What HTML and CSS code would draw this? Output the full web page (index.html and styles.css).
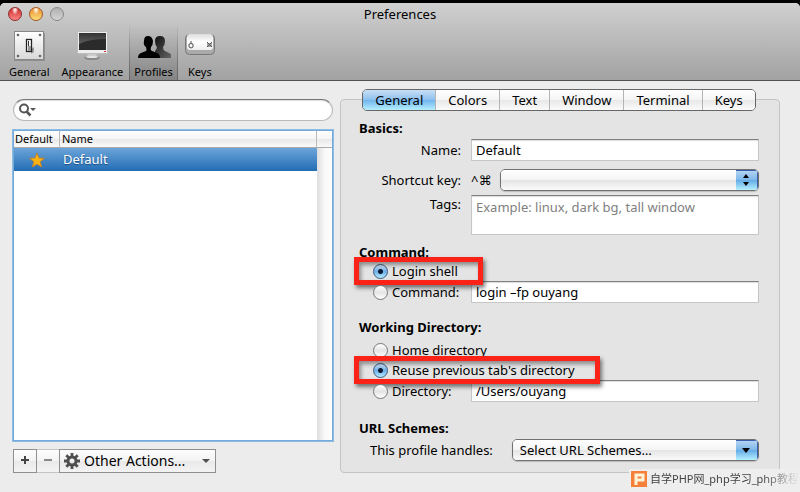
FILE: index.html
```html
<!DOCTYPE html>
<html lang="en">
<head>
<meta charset="UTF-8" />
<meta name="viewport" content="width=device-width, initial-scale=1" />
<title>Preferences</title>
<link rel="stylesheet" href="styles.css">
</head>
<body>
<div class="window">

    <!-- Title bar and toolbar -->
    <header class="titlebar">
        <div class="title-row">
            <div class="lights">
                <button type="button" class="light close" aria-label="Close"></button>
                <button type="button" class="light minimize" aria-label="Minimize"></button>
                <button type="button" class="light zoom" aria-label="Zoom"></button>
            </div>
            <h1>Preferences</h1>
        </div>
        <nav class="toolbar">
            <button type="button" class="tool">
                <svg width="32" height="32" viewBox="0 0 32 32">
                    <defs>
                        <linearGradient id="plate" x1="0" y1="0" x2="0" y2="1">
                            <stop offset="0" stop-color="#fff" /><stop offset="1" stop-color="#d8d8d8" />
                        </linearGradient>
                    </defs>
                    <rect x="1" y="4" width="31" height="28" fill="#777" opacity=".6" />
                    <rect x="1.500" y="2.500" width="29" height="28" fill="url(#plate)" stroke="#888" />
                    <g fill="#666">
                        <circle cx="5" cy="6" r="1.300" /><circle cx="27" cy="6" r="1.300" />
                        <circle cx="5" cy="27" r="1.300" /><circle cx="27" cy="27" r="1.300" />
                    </g>
                    <path d="M18 20l3-2v5l-3 2z" fill="#999" />
                    <rect x="13.500" y="10.500" width="5" height="12" fill="#fff" stroke="#222" stroke-width="1.300" />
                    <path d="M15.500 12v5" stroke="#333" />
                    <rect x="15" y="17" width="3" height="5" fill="#999" />
                </svg>
                General
            </button>
            <button type="button" class="tool">
                <svg width="32" height="32" viewBox="0 0 32 32">
                    <defs>
                        <linearGradient id="screen" x1="0" y1="0" x2="0" y2="1">
                            <stop offset="0" stop-color="#333" /><stop offset="1" stop-color="#777" />
                        </linearGradient>
                    </defs>
                    <ellipse cx="16" cy="29" rx="8" ry="2" fill="#888" />
                    <path d="M12 24h8l1 4H11z" fill="#ccc" />
                    <ellipse cx="16" cy="28" rx="6" ry="1" fill="#e4e4e4" />
                    <rect x="1.500" y="2.500" width="30" height="22" rx="1" fill="#eee" stroke="#bbb" />
                    <rect x="3" y="4" width="27" height="17" fill="url(#screen)" />
                    <path d="M3 15q10-5 27-5v11H3z" fill="#2b2b2b" />
                    <rect x="28" y="22" width="2" height="1" fill="#d33" />
                </svg>
                Appearance
            </button>
            <button type="button" class="tool selected">
                <svg width="34" height="32" viewBox="0 0 34 32">
                    <defs>
                        <linearGradient id="person" x1="0" y1="0" x2="1" y2="1">
                            <stop offset="0" stop-color="#111" /><stop offset="1" stop-color="#666" />
                        </linearGradient>
                    </defs>
                    <path d="M18 29V22q2-2 2-4-2-2-2-6 0-5 5-5t5 5q0 4-2 6 0 3 2 4l4 2q3 1 3 5z" fill="url(#person)" />
                    <path d="M1 29q0-4 3-5l5-2q1-1 0-4-3-2-2-6 0-5 4-5t5 5q0 4-2 6-1 3 1 4l5 2q3 1 3 5z" />
                </svg>
                Profiles
            </button>
            <button type="button" class="tool">
                <svg width="32" height="32" viewBox="0 0 32 32">
                    <defs>
                        <linearGradient id="keytop" x1="0" y1="0" x2="0" y2="1">
                            <stop offset="0" stop-color="#ddd" /><stop offset=".5" stop-color="#fff" /><stop offset="1" stop-color="#eee" />
                        </linearGradient>
                    </defs>
                    <rect x="1.500" y="5.500" width="29" height="20" rx="4" fill="#aaa" stroke="#777" />
                    <rect x="3" y="5" width="26" height="16" rx="3" fill="url(#keytop)" />
                    <g fill="none" stroke="#555">
                        <path d="M5 15q2-1 4 0v3q-2 2-4 0zM7 14v-2" />
                        <path d="M23 13l5 5M28 13l-5 5M23 15h5M23 17h5" />
                    </g>
                </svg>
                Keys
            </button>
        </nav>
    </header>

    <main class="content">

        <!-- Profile list -->
        <section class="profiles">
            <div class="search">
                <svg width="20" height="14" viewBox="0 0 20 14">
                    <circle cx="6" cy="5.500" r="4" fill="none" stroke="#555" stroke-width="2" />
                    <path d="M8.500 8.500l4 4" stroke="#555" stroke-width="2.500" />
                    <path d="M12 5h6l-3 3z" fill="#555" />
                </svg>
                <input type="search" aria-label="Search profiles">
            </div>

            <div class="list">
                <table>
                    <thead>
                        <tr><th class="col-default">Default</th><th>Name</th><th class="col-scroll"></th></tr>
                    </thead>
                    <tbody>
                        <tr>
                            <td class="col-default">
                                <svg width="16" height="16" viewBox="0 0 16 16">
                                    <path d="M8 1l2 5 5.500.3-4.300 3.500L12.700 15 8 12.200 3.300 15l1.500-5.200L.500 6.300 6 6z" fill="#fbb414" stroke="#b98332" />
                                </svg>
                            </td>
                            <td>Default</td>
                            <td class="col-scroll"></td>
                        </tr>
                    </tbody>
                </table>
                <div class="scroll-track"></div>
            </div>

            <div class="list-actions">
                <button type="button" aria-label="Add profile">
                    <svg width="10" height="10" viewBox="0 0 10 10"><path d="M1 4h8M5 0v8" stroke="#444" stroke-width="2" /></svg>
                </button>
                <button type="button" class="remove" aria-label="Remove profile" disabled>
                    <svg width="10" height="10" viewBox="0 0 10 10"><path d="M1 4h8" stroke="#888" stroke-width="2" /></svg>
                </button>
                <button type="button" class="other">
                    <svg width="16" height="16" viewBox="0 0 16 16">
                        <circle cx="8" cy="8" r="4" fill="none" stroke="#505050" stroke-width="3" />
                        <path d="M8 0v4M8 12v4M0 8h4M12 8h4M2.300 2.300l3 3M10.700 10.700l3 3M13.700 2.300l-3 3M5.300 10.700l-3 3" stroke="#505050" stroke-width="2.800" />
                    </svg>
                    <span>Other Actions...</span>
                    <svg width="8" height="4" viewBox="0 0 8 4"><path d="M0 0h8L4 4z" fill="#505050" /></svg>
                </button>
            </div>
        </section>

        <!-- Settings of the selected profile -->
        <section class="panel">
            <div class="tabs" role="tablist">
                <button type="button" role="tab" class="active" aria-selected="true">General</button>
                <button type="button" role="tab">Colors</button>
                <button type="button" role="tab">Text</button>
                <button type="button" role="tab">Window</button>
                <button type="button" role="tab">Terminal</button>
                <button type="button" role="tab">Keys</button>
            </div>

            <form>
                <h2>Basics:</h2>
                <div class="row name-row">
                    <label class="row-label" for="name">Name:</label>
                    <input type="text" id="name" value="Default">
                </div>
                <div class="row shortcut-row">
                    <label class="row-label" for="shortcut">Shortcut key:</label>
                    <div class="shortcut">
                        <span class="modifiers">^⌘</span>
                        <div class="select stepper">
                            <select id="shortcut"><option></option></select>
                            <svg width="22" height="20" viewBox="0 0 22 20"><path d="M7 8h6l-3-4zM7 12h6l-3 4z" /></svg>
                        </div>
                    </div>
                </div>
                <div class="row tags-row">
                    <label class="row-label" for="tags">Tags:</label>
                    <textarea id="tags" placeholder="Example: linux, dark bg, tall window"></textarea>
                </div>

                <h2 class="command-title">Command:</h2>
                <div class="choice">
                    <label class="marked"><input type="radio" name="command" checked>Login shell</label>
                </div>
                <div class="row">
                    <div class="choice">
                        <label><input type="radio" name="command">Command:</label>
                    </div>
                    <input type="text" aria-label="Command" value="login –fp ouyang">
                </div>

                <h2 class="directory-title">Working Directory:</h2>
                <div class="choice">
                    <label><input type="radio" name="directory">Home directory</label>
                </div>
                <div class="choice">
                    <label class="marked"><input type="radio" name="directory" checked>Reuse previous tab's directory</label>
                </div>
                <div class="row">
                    <div class="choice">
                        <label><input type="radio" name="directory">Directory:</label>
                    </div>
                    <input type="text" aria-label="Directory" value="/Users/ouyang">
                </div>

                <h2 class="url-title">URL Schemes:</h2>
                <div class="url-row">
                    <label for="schemes">This profile handles:</label>
                    <div class="select">
                        <select id="schemes"><option>Select URL Schemes…</option></select>
                        <svg width="22" height="20" viewBox="0 0 22 20"><path d="M6 8h8l-4 5z" /></svg>
                    </div>
                </div>
            </form>
        </section>
    </main>

    <div class="watermark">
        <svg width="16" height="16" viewBox="0 0 16 16">
            <rect width="16" height="16" fill="#f4803a" />
            <path d="M5 14V4h7v5H6" fill="none" stroke="#fff3d8" stroke-width="3" />
        </svg>
        <span>自学PHP网_php学习_php教程</span>
    </div>
</div>
</body>
</html>
```
FILE: styles.css
```css
* {
    box-sizing: border-box;
}
body {
    margin: 0;
    background: #ececec;
    color: #000;
    font-family: "Noto Sans", "DejaVu Sans", sans-serif;
    font-size: 13px;
    line-height: 18px;
}
button, input, select, textarea {
    margin: 0;
    font: inherit;
    color: inherit;
}
svg {
    display: block;
    flex: none;
}
.window {
    position: relative;
    min-height: 100vh;
    border-top: 3px solid #000;
    overflow: hidden;
}

/* Title bar */
.titlebar {
    background: linear-gradient(#d0d0d0, #a2a2a2);
    border-bottom: 1px solid #515151;
    border-radius: 5px 5px 0 0;
    box-shadow: 0 -6px 0 6px #000;
    clip-path: inset(-3px 0 0 0);
}
.title-row {
    display: grid;
    grid-template-columns: 1fr auto 1fr;
    align-items: center;
    height: 22px;
    padding: 0 8px;
}
.lights {
    display: flex;
    gap: 7px;
}
.light {
    width: 14px;
    height: 14px;
    padding: 0;
    border: 1px solid #888;
    border-radius: 50%;
}
.close {
    border-color: #8e2b2b;
    background: radial-gradient(ellipse at 50% 15%, #fff 0, #f3a5a5 20%, transparent 35%), linear-gradient(#c92e2e, #ff8585);
}
.minimize {
    border-color: #a45a20;
    background: radial-gradient(ellipse at 50% 15%, #fff 0, #f8cf9a 20%, transparent 35%), linear-gradient(#e58a30, #ffe07a);
}
.zoom {
    background: linear-gradient(#b0b0b0, #d4d4d4);
}
h1 {
    margin: 0;
    font-size: 13px;
    font-weight: normal;
}
.toolbar {
    display: flex;
    height: 55px;
    padding-left: 3px;
}
.tool {
    display: flex;
    flex-direction: column;
    align-items: center;
    gap: 3px;
    padding: 4px 6px 0;
    border: none;
    background: none;
    font-size: 11px;
    line-height: 16px;
}
.tool.selected {
    padding: 4px 4px 0;
    border: solid transparent;
    border-width: 0 1px;
    border-image: linear-gradient(transparent, #666) 1;
    background: linear-gradient(transparent, rgba(0, 0, 0, 0.18));
}

/* Content */
.content {
    display: grid;
    grid-template-columns: 8fr 11fr;
    gap: 7px;
    padding: 18px 20px 20px 13px;
}
.profiles {
    display: flex;
    flex-direction: column;
}
.search {
    display: flex;
    align-items: center;
    height: 22px;
    padding: 0 10px 0 4px;
    border: 1px solid #bbb;
    border-top: 1px solid #777;
    border-radius: 11px;
    background: #fff;
    box-shadow: inset 0 1px 1px #ddd;
}
.search input {
    flex: 1;
    min-width: 0;
    border: none;
    outline: none;
    background: none;
    appearance: none;
}
.list {
    display: flex;
    flex-direction: column;
    flex: 1;
    margin: 9px 0 8px;
    border: 1px solid #72aadb;
    box-shadow: 0 0 0 1px #8dbbe2;
    background: #fff;
}
table {
    width: 100%;
    border-spacing: 0;
    table-layout: fixed;
}
th {
    height: 17px;
    padding: 0 2px;
    border-bottom: 1px solid #aaa;
    border-right: 1px solid #bbb;
    background: linear-gradient(#fff, #f5f5f5 50%, #e8e8e8 50%, #fafafa);
    font-size: 11px;
    font-weight: normal;
    line-height: 16px;
    text-align: left;
}
th.col-scroll {
    border-right: none;
}
th.col-default {
    padding: 0 1px;
}
td {
    height: 23px;
    padding: 0 3px 2px;
    background: linear-gradient(#6ba5d9, #236cb4);
    color: #fff;
    text-shadow: 0 1px 1px #1c4f85;
}
.col-default {
    width: 46px;
}
.col-default svg {
    margin: 2px auto 0;
}
.col-scroll {
    width: 15px;
}
td.col-scroll {
    background: linear-gradient(to right, #ddd, #f8f8f8 50%, #fff);
}
.scroll-track {
    flex: 1;
    align-self: flex-end;
    width: 15px;
    background: linear-gradient(to right, #ddd, #f8f8f8 50%, #fff);
}
.list-actions {
    display: flex;
}
.list-actions button {
    display: flex;
    align-items: center;
    justify-content: center;
    width: 24px;
    height: 24px;
    padding: 0;
    border: 1px solid #8f8f8f;
    background: linear-gradient(#fdfdfd, #f3f3f3 50%, #e9e9e9 50%, #f3f3f3);
}
.list-actions .remove {
    width: 22px;
    border-color: #c4c4c4;
    border-width: 1px 0;
}
.list-actions .other {
    gap: 4px;
    width: 157px;
    padding: 0 5px 0 4px;
}
.other span {
    flex: 1;
    font-size: 14px;
    text-align: left;
}

/* Panel */
.panel {
    padding: 0 20px 11px 18px;
    border: 1px solid #c4c4c4;
    border-radius: 4px;
    background: #e4e4e4;
}
.tabs {
    display: flex;
    width: max-content;
    margin: -11px auto 8px;
    border: 1px solid #666;
    border-radius: 5px;
    background: #f4f4f4;
    overflow: hidden;
}
.tabs button {
    height: 20px;
    padding: 0 12px;
    border: none;
    border-left: 1px solid #b4b4b4;
    background: linear-gradient(#fff, #f4f4f4 50%, #e8e8e8 50%, #fafafa);
}
.tabs button.active {
    border-left: none;
    background: linear-gradient(#c9dff6, #8cc0ee 50%, #6fb3ec 50%, #b5f0ff);
}
h2 {
    margin: 0;
    font-size: 13px;
    font-weight: bold;
    line-height: 18px;
}
.row {
    display: grid;
    grid-template-columns: 102px 1fr;
    gap: 10px;
}
.row-label {
    line-height: 22px;
    text-align: right;
}
.name-row {
    margin-top: 2px;
}
.shortcut-row {
    margin-top: 8px;
}
.tags-row {
    margin-top: 4px;
}
.tags-row .row-label {
    line-height: 18px;
}
input[type="text"], textarea {
    width: 100%;
    min-width: 0;
    height: 22px;
    padding: 0 4px;
    border: 1px solid #c6c6c6;
    border-top: 1px solid #808080;
    border-radius: 0;
    outline: none;
    background: #fff;
    box-shadow: inset 0 1px 1px #ddd;
}
textarea {
    display: block;
    height: 40px;
    padding: 2px 4px;
    resize: none;
}
textarea::placeholder {
    color: #808080;
}
.shortcut {
    display: flex;
    gap: 7px;
    align-items: center;
}
.modifiers {
    width: 22px;
    white-space: nowrap;
}
.select {
    position: relative;
    flex: 1;
    height: 22px;
    border: 1px solid #707070;
    border-radius: 5px;
    overflow: hidden;
    box-shadow: 0 1px 1px #bbb;
}
.select select {
    display: block;
    width: 100%;
    height: 20px;
    padding: 0 26px 0 7px;
    border: none;
    border-radius: 0;
    outline: none;
    appearance: none;
    background: linear-gradient(#fff, #f4f4f4 50%, #e4e4e4 50%, #fafafa);
}
.select svg {
    position: absolute;
    top: 0;
    right: 0;
    background: linear-gradient(#b9d6f3, #7db8ea 50%, #62aae6 50%, #b5f0ff);
    box-shadow: inset -1px 1px 0 #3a5fae;
    pointer-events: none;
}
.command-title {
    margin-top: 8px;
}
.directory-title {
    margin: 15px 0 4px;
}
.url-title {
    margin: 17px 0 2px;
}
.choice {
    display: flex;
    align-items: center;
    height: 20px;
    padding-left: 14px;
    white-space: nowrap;
}
.row .choice {
    height: 22px;
}
.choice label {
    position: relative;
    display: flex;
    align-items: center;
    gap: 4px;
}
input[type="radio"] {
    width: 15px;
    height: 15px;
    border: 1px solid #777;
    border-radius: 50%;
    appearance: none;
    background: linear-gradient(#fff, #e4e4e4 50%, #fff);
}
input[type="radio"]:checked {
    border-color: #3c5a80;
    background: radial-gradient(circle, #0a1a30 0 2px, transparent 3px), linear-gradient(#d2e6f8, #6daee6 50%, #b5ecff);
}
/* Red highlight around an option */
.marked::after {
    content: "";
    position: absolute;
    inset: -5px -25px -5px -19px;
    border: 5px solid #fb2218;
    box-shadow: 2px 3px 4px rgba(0, 0, 0, 0.5), inset 2px 3px 4px rgba(0, 0, 0, 0.4);
    pointer-events: none;
}
.url-row {
    display: flex;
    align-items: center;
    gap: 19px;
    padding-left: 11px;
}

/* Site mark in the corner */
.watermark {
    position: absolute;
    right: 0;
    bottom: 0;
    display: flex;
    align-items: center;
    gap: 3px;
    width: 171px;
    height: 24px;
    padding: 0 0 4px 2px;
    background: #eee;
}
.watermark span {
    color: #444;
    font-family: "Noto Sans", "Noto Sans CJK SC", sans-serif;
    font-size: 11px;
    white-space: nowrap;
    mask-image: linear-gradient(to right, #000 75%, transparent);
}
```
